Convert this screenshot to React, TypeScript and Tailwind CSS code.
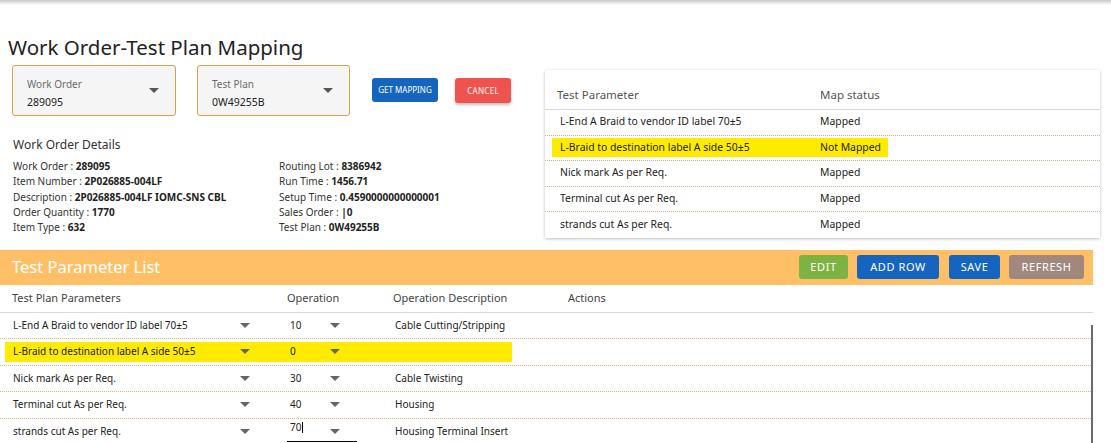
import React from "react";

const font = { fontFamily: '"Noto Sans", "Open Sans", sans-serif' };

const Caret: React.FC<{ className?: string }> = ({ className }) => (
  <svg width="10" height="5" viewBox="0 0 10 5" className={className}>
    <path d="M0 0 L10 0 L5 5 Z" fill="currentColor" />
  </svg>
);

const SelectBox: React.FC<{ label: string; value: string; width: string }> = ({ label, value, width }) => (
  <div className={`relative h-[51px] ${width} rounded-[3px] border border-[#d9a04a] bg-[#f5f5f5] pl-[14px] pt-[12px]`}>
    <div className="text-[10px] leading-[13px] text-[#6b6b6b]">{label}</div>
    <div className="mt-[4px] text-[10.5px] leading-[14px] text-[#222]">{value}</div>
    <Caret className="absolute right-[16px] top-[22px] text-[#555]" />
  </div>
);

const details: [string, string][][] = [
  [
    ["Work Order", "289095"],
    ["Item Number", "2P026885-004LF"],
    ["Description", "2P026885-004LF IOMC-SNS CBL"],
    ["Order Quantity", "1770"],
    ["Item Type", "632"],
  ],
  [
    ["Routing Lot", "8386942"],
    ["Run Time", "1456.71"],
    ["Setup Time", "0.4590000000000001"],
    ["Sales Order", "|0"],
    ["Test Plan", "0W49255B"],
  ],
];

const mapRows = [
  { p: "L-End A Braid to vendor ID label 70±5", s: "Mapped" },
  { p: "L-Braid to destination label A side 50±5", s: "Not Mapped", hl: true },
  { p: "Nick mark As per Req.", s: "Mapped" },
  { p: "Terminal cut As per Req.", s: "Mapped" },
  { p: "strands cut As per Req.", s: "Mapped" },
];

const paramRows = [
  { p: "L-End A Braid to vendor ID label 70±5", op: "10", d: "Cable Cutting/Stripping" },
  { p: "L-Braid to destination label A side 50±5", op: "0", d: "", hl: true },
  { p: "Nick mark As per Req.", op: "30", d: "Cable Twisting" },
  { p: "Terminal cut As per Req.", op: "40", d: "Housing" },
  { p: "strands cut As per Req.", op: "70", d: "Housing Terminal Insert", editing: true },
];

export default function App() {
  return (
    <div style={font} className="h-[443px] w-[1111px] overflow-hidden bg-white text-[#222]">
      <div className="h-[5px] bg-gradient-to-b from-[#c9c9c9] to-white" />
      <h1 className="ml-[8px] mt-[29px] text-[20.5px] leading-[26px] text-[#222]">Work Order-Test Plan Mapping</h1>

      <div className="flex">
        <div className="w-[545px]">
          <div className="ml-[12px] mt-[5px] flex items-start">
            <SelectBox label="Work Order" value="289095" width="w-[164px]" />
            <div className="w-[21px]" />
            <SelectBox label="Test Plan" value="0W49255B" width="w-[153px]" />
            <button className="ml-[22px] mt-[13px] h-[24px] w-[66px] rounded-[3px] bg-[#1565c0] text-[8px] text-white">
              GET MAPPING
            </button>
            <button className="ml-[17px] mt-[13px] h-[25px] w-[56px] rounded-[3px] bg-[#ef5350] text-[8px] tracking-[0.3px] text-white shadow-[0_2px_3px_rgba(0,0,0,0.25)]">
              CANCEL
            </button>
          </div>
          <div className="ml-[13px] mt-[21px] text-[12px] leading-[16px] text-[#333]">Work Order Details</div>
          <div className="ml-[13px] mt-[6px] flex">
            {details.map((col, ci) => (
              <div key={ci} className={ci === 0 ? "w-[266px]" : ""}>
                {col.map(([k, v]) => (
                  <div key={k} className="h-[15.25px] text-[10px] leading-[15px] text-[#333]">
                    {k} : <span className="font-bold text-[#222]">{v}</span>
                  </div>
                ))}
              </div>
            ))}
          </div>
        </div>

        <div className="mt-[10px] w-[555px] self-start bg-white shadow-[0_1px_3px_rgba(0,0,0,0.25)]">
          <div className="flex h-[40px] items-end border-b border-[#d6d6d6] pb-[6px] text-[11.5px] text-[#555]">
            <div className="w-[275px] pl-[12px]">Test Parameter</div>
            <div>Map status</div>
          </div>
          {mapRows.map((r, i) => (
            <div
              key={i}
              className={`flex h-[25.5px] items-center text-[10.4px] ${i < 4 ? "border-b border-dotted border-[#c8b99a]" : ""}`}
            >
              <div className={`ml-[7px] flex h-[19px] w-[336px] items-center ${r.hl ? "bg-[#ffeb00]" : ""}`}>
                <div className="w-[268px] shrink-0 pl-[8px]">{r.p}</div>
                <div className="whitespace-nowrap">{r.s}</div>
              </div>
            </div>
          ))}
        </div>
      </div>

      <div className="mt-[12px] flex h-[35px] w-[1093px] items-center bg-[#ffbf66] pl-[12px] pr-[9px]">
        <div className="flex-1 text-[16.5px] text-white">Test Parameter List</div>
        <button className="h-[24px] w-[49px] rounded-[3px] bg-[#7cb342] text-[11px] tracking-[0.6px] text-white">EDIT</button>
        <button className="ml-[9px] h-[24px] w-[82px] rounded-[3px] bg-[#1565c0] text-[11px] tracking-[0.6px] text-white">ADD ROW</button>
        <button className="ml-[10px] h-[24px] w-[51px] rounded-[3px] bg-[#1565c0] text-[11px] tracking-[0.6px] text-white">SAVE</button>
        <button className="ml-[9px] h-[24px] w-[75px] rounded-[3px] bg-[#a1887f] text-[11px] tracking-[0.6px] text-white">REFRESH</button>
      </div>

      <div className="relative w-[1093px]">
        <div className="flex h-[28px] items-center border-b border-[#d9d9d9] text-[11px] text-[#444]">
          <div className="w-[287px] pl-[12px]">Test Plan Parameters</div>
          <div className="w-[106px]">Operation</div>
          <div className="w-[175px]">Operation Description</div>
          <div>Actions</div>
        </div>
        {paramRows.map((r, i) => (
          <div
            key={i}
            className={`flex h-[26.5px] items-center text-[10px] ${i < 4 ? "border-b border-dotted border-[#d4b98a]" : ""}`}
          >
            <div className={`ml-[5px] flex h-[20px] w-[507px] items-center ${r.hl ? "bg-[#ffeb00]" : ""}`}>
              <div className="w-[235px] shrink-0 pl-[8px]">{r.p}</div>
              <Caret className="shrink-0 text-[#666]" />
              <div className="relative ml-[40px] flex h-[20px] w-[60px] shrink-0 items-center">
                <span className={r.editing ? "-translate-y-[4px]" : ""}>
                  {r.op}
                  {r.editing && <span className="ml-[1px] inline-block h-[11px] w-[1px] translate-y-[2px] bg-black" />}
                </span>
                <Caret className="ml-auto mr-[10px] text-[#666]" />
                {r.editing && <div className="absolute -left-[3px] top-[19px] h-[1px] w-[70px] bg-black" />}
              </div>
              <div className="pl-[45px]">{r.d}</div>
            </div>
          </div>
        ))}
        <div className="absolute right-[0px] top-[40px] h-[130px] w-[2px] bg-[#6b6b6b]" />
      </div>
    </div>
  );
}
